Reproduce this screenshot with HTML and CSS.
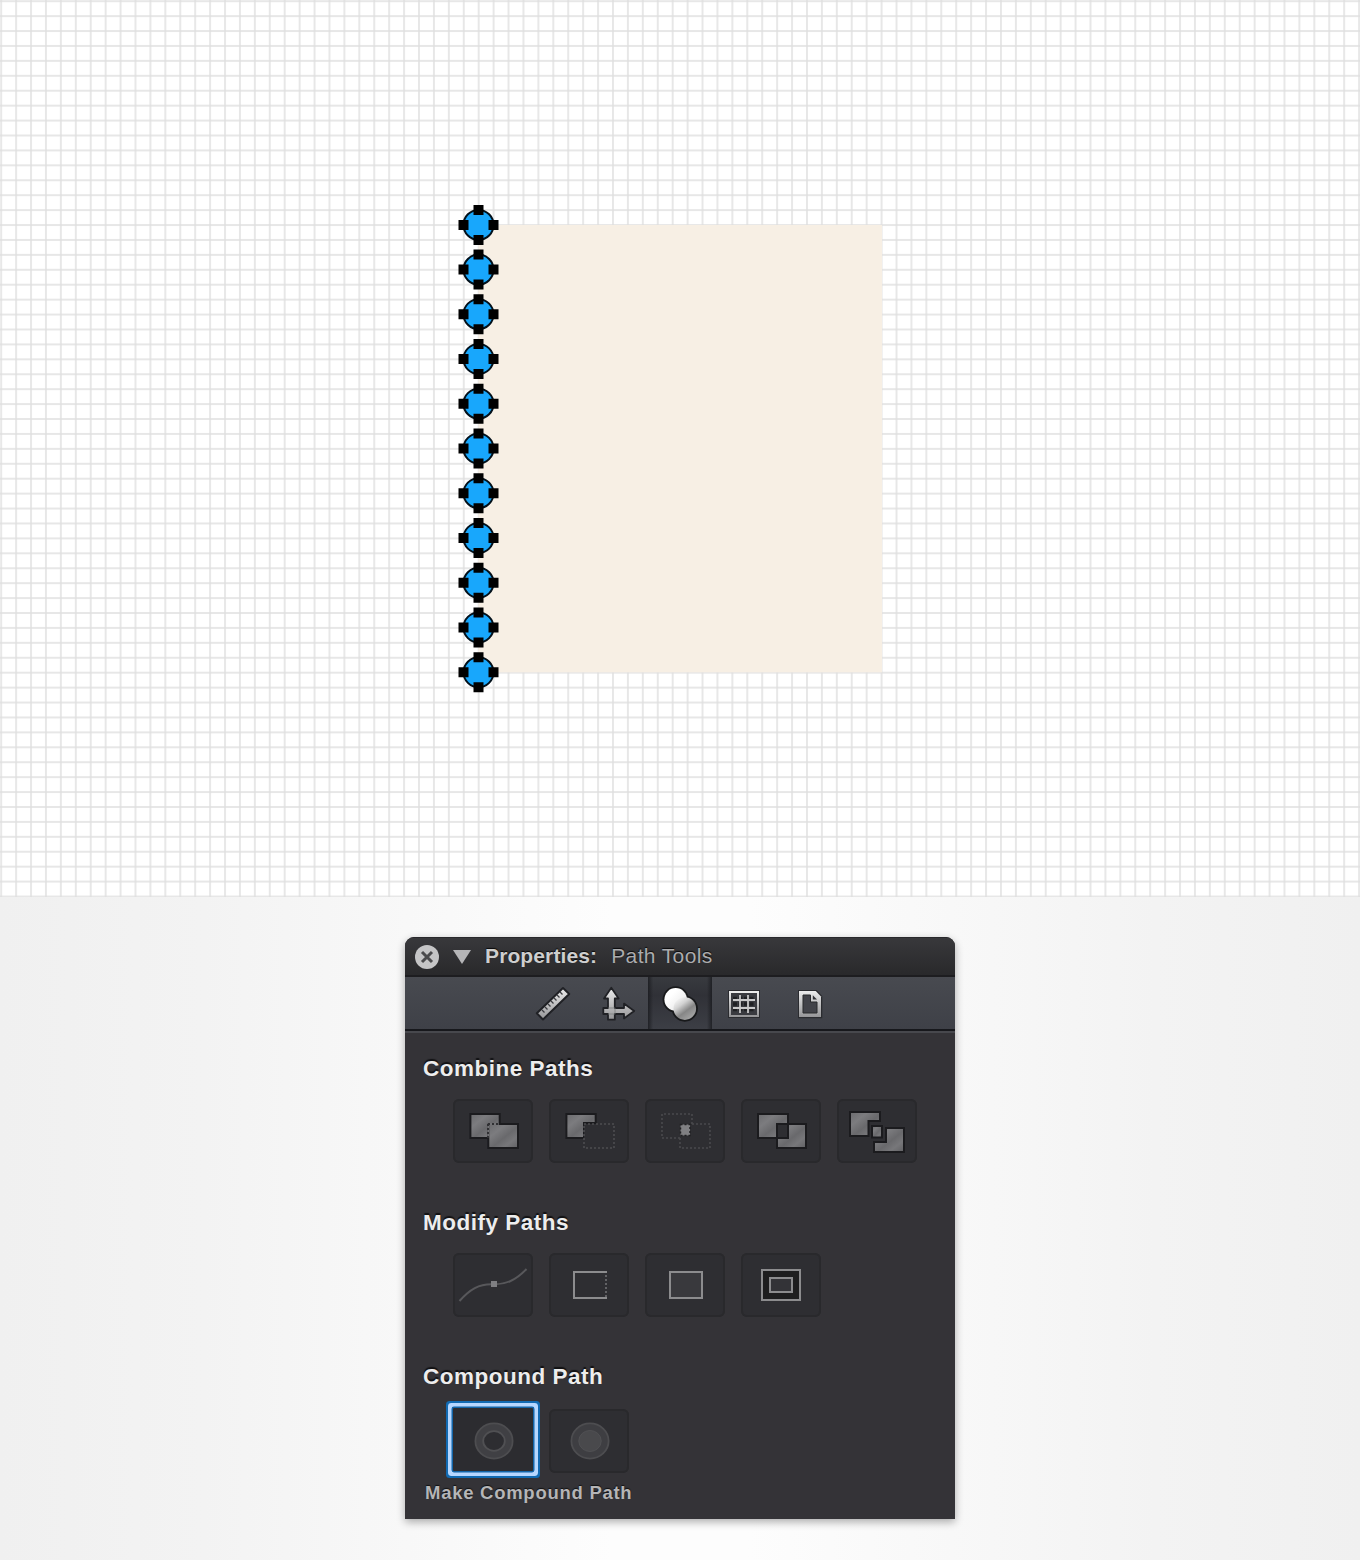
FILE: index.html
```html
<!DOCTYPE html>
<html lang="en">
<head>
<meta charset="utf-8">
<title>Path Tools</title>
<link rel="stylesheet" href="styles.css">
</head>
<body>
<svg class="canvas" viewBox="0 0 1360 897">
  <defs>
    <pattern id="grid" x="1.2" y="1.2" width="14.922" height="14.922" patternUnits="userSpaceOnUse">
      <path d="M0 0H15M0 14.922H15M0 0V15M14.922 0V15" stroke="#dfdfdf" stroke-width="1.45" fill="none"/>
    </pattern>
    <g id="dot">
      <circle r="15" fill="#18a7fc" stroke="#03111b" stroke-width="2"/>
      <path d="M-5-20H5V-10H-5zM-5 10H5V20H-5zM-20-5H-10V5H-20zM10-5H20V5H10z" fill="#000"/>
    </g>
  </defs>
  <rect width="1360" height="897" fill="#fff"/>
  <rect width="1360" height="897" fill="url(#grid)"/>
  <rect x="478.5" y="225" width="403.5" height="447.3" fill="#f7efe4"/>
  <use href="#dot" x="478.5" y="224.9"/>
  <use href="#dot" x="478.5" y="269.6"/>
  <use href="#dot" x="478.5" y="314.2"/>
  <use href="#dot" x="478.5" y="359"/>
  <use href="#dot" x="478.5" y="403.7"/>
  <use href="#dot" x="478.5" y="448.5"/>
  <use href="#dot" x="478.5" y="493.2"/>
  <use href="#dot" x="478.5" y="538"/>
  <use href="#dot" x="478.5" y="582.8"/>
  <use href="#dot" x="478.5" y="627.5"/>
  <use href="#dot" x="478.5" y="672.3"/>
</svg>
<main class="desk">
  <section class="panel">
    <header class="titlebar">
      <svg class="close" viewBox="0 0 24 24"><circle cx="12" cy="12" r="12" fill="#c5c5c6"/><path d="M7 7l10 10m0-10l-10 10" stroke="#4b4b4d" stroke-width="3"/></svg>
      <svg class="fold" viewBox="0 0 18 14"><path d="M0 0H18L9 14z" fill="#b5b5b7"/></svg>
      <b class="name">Properties:</b><span class="sub">Path Tools</span>
    </header>
    <nav class="toolbar">
      <svg class="tool" viewBox="0 0 64 52">
        <defs><linearGradient id="metal" x2="0" y2="1"><stop stop-color="#ececec"/><stop offset="1" stop-color="#969698"/></linearGradient></defs>
        <path d="M43 11L49.2 17L23 42.5L16.8 36.3z" fill="url(#metal)" stroke="#202125" stroke-width="2" stroke-linejoin="round"/>
        <path d="M22 33l2.5 2.5M25 30l2.5 2.5M28 27l2.5 2.5M31 24l2.5 2.5M34 21l2.5 2.5M37 18l2.5 2.5M40 15l2.5 2.5" stroke="#3b3c40" stroke-width="1.3"/>
      </svg>
      <svg class="tool" viewBox="0 0 64 52">
        <path d="M27.3 10.8L34.6 21.5H30.8V31H40V26.6L50.2 34L40 41.4V37H30.8V42.7H24V37H19.3V31H24V21.5H20z" fill="url(#metal)" stroke="#202125" stroke-width="1.8" stroke-linejoin="round"/>
        <path d="M24 31h7v6h-7" fill="none" stroke="#77787a" stroke-width=".7"/>
      </svg>
      <svg class="tool tool-active" viewBox="0 0 64 52">
        <defs>
          <linearGradient id="b1" x2="1" y2="1"><stop offset=".3" stop-color="#fff"/><stop offset="1" stop-color="#e2e2e2"/></linearGradient>
          <linearGradient id="b2" x1=".15" y1=".1" x2=".75" y2=".9"><stop stop-color="#f4f4f4"/><stop offset=".3" stop-color="#d2d2d2"/><stop offset=".65" stop-color="#868686"/><stop offset="1" stop-color="#a2a2a2"/></linearGradient>
        </defs>
        <g fill="#18191b"><circle cx="27.7" cy="22.4" r="13.1"/><circle cx="36.8" cy="31.6" r="13.1"/></g>
        <circle cx="27.7" cy="22.4" r="11.3" fill="url(#b1)"/><circle cx="36.8" cy="31.6" r="11.3" fill="url(#b2)"/>
      </svg>
      <svg class="tool" viewBox="0 0 64 52">
        <rect x="16" y="13" width="32" height="28" fill="#2b2c30"/>
        <rect x="18" y="15" width="28" height="24" fill="#3a3b40" stroke="url(#metal)" stroke-width="2"/>
        <path d="M21 21.5H43M21 27H43M21 32.5H43" stroke="#1f2023" stroke-width="3.6" stroke-dasharray="4 1.5"/>
        <path d="M21 23H43M21 31H43M28 18V36M36 18V36" stroke="#c9c9ca" stroke-width="1.8"/>
      </svg>
      <svg class="tool" viewBox="0 0 64 52">
        <path d="M22 13H40.5L46.3 19V41.2H22z" fill="#2b2c30"/>
        <path d="M23 14H39.7L45 19.5V40H23z" fill="url(#metal)"/>
        <path d="M27 18H34.5V25H41V36H27z" fill="#424349" stroke="#292a2d" stroke-width="1"/>
        <path d="M36.8 18.3V22.5H41z" fill="#303135"/>
      </svg>
    </nav>
    <div class="content">
      <h2>Combine Paths</h2>
      <div class="buttons">
        <svg class="btn" viewBox="0 0 80 64">
          <defs>
            <linearGradient id="tile" x2="1" y2="1"><stop stop-color="#6b6b6e"/><stop offset=".3" stop-color="#7c7c7f"/><stop offset=".55" stop-color="#69696c"/><stop offset=".75" stop-color="#77777a"/><stop offset="1" stop-color="#606063"/></linearGradient>
          </defs>
          <g fill="url(#tile)" stroke="#1b1b1e" stroke-width="2"><path d="M17.4 15H46.7V39H17.4z"/><path d="M35.3 25H65V49H35.3z"/></g>
          <path d="M36.3 25H45.7M35.3 24V38" stroke="#737376" stroke-width="2"/><path d="M35 25H47M35 25V39" stroke="#303033" stroke-width="2" stroke-dasharray="2"/>
        </svg>
        <svg class="btn" viewBox="0 0 80 64">
          <path d="M17.4 15H46.7V24H35V39H17.4z" fill="url(#tile)" stroke="#1b1b1e" stroke-width="2"/>
          <rect x="35" y="25" width="30" height="24" fill="#2e2e32" stroke="#4d4d50" stroke-width="1.6" stroke-dasharray="2"/>
        </svg>
        <svg class="btn" viewBox="0 0 80 64">
          <path d="M35 39H17V15H47V25M47 25H65V49H35V39" fill="none" stroke="#4a4a4d" stroke-width="1.6" stroke-dasharray="2"/>
          <rect x="35.5" y="25.5" width="9.5" height="11" fill="#808083" stroke="#202023" stroke-width="1.5" stroke-dasharray="2"/>
        </svg>
        <svg class="btn" viewBox="0 0 80 64">
          <path d="M17 15H47V25H36V39H17z" fill="url(#tile)" stroke="#1b1b1e" stroke-width="2"/>
          <path d="M47 25H65V49H36V39H47z" fill="url(#tile)" stroke="#1b1b1e" stroke-width="2"/>
        </svg>
        <svg class="btn" viewBox="0 0 80 64">
          <g fill="url(#tile)" stroke="#1b1b1e" stroke-width="2"><path d="M13 13H43V22H31.5V37H13z"/><path d="M35 27H45V38.5H35z"/><path d="M49 29H67V53H37V43H49z"/></g>
        </svg>
      </div>
      <h2>Modify Paths</h2>
      <div class="buttons">
        <svg class="btn" viewBox="0 0 80 64">
          <path d="M6.5 48C17 36 26 31 39 31.2C53 32 63 27 73.5 16" fill="none" stroke="#58585b" stroke-width="2"/>
          <rect x="38" y="28" width="6" height="6" fill="#7f7f82"/>
        </svg>
        <svg class="btn" viewBox="0 0 80 64">
          <path d="M58 19H25V45H58" fill="none" stroke="#8c8c8e" stroke-width="2"/><path d="M57 22V44" stroke="#626265" stroke-width="2" stroke-dasharray="2"/>
        </svg>
        <svg class="btn" viewBox="0 0 80 64"><rect x="25" y="19" width="32" height="26" fill="#39393d" stroke="#8c8c8e" stroke-width="2"/></svg>
        <svg class="btn" viewBox="0 0 80 64"><rect x="21" y="17" width="38" height="30" fill="#1e1e1f" stroke="#8c8c8e" stroke-width="2"/><rect x="29" y="25" width="22" height="14" fill="#333337" stroke="#8c8c8e" stroke-width="2"/></svg>
      </div>
      <h2>Compound Path</h2>
      <div class="buttons">
        <svg class="btn btn-focus" viewBox="0 -1 80 63">
          <ellipse cx="41" cy="32" rx="18.6" ry="17.6" fill="#404044" stroke="#4d4d50" stroke-width="1.8"/>
          <ellipse cx="41" cy="32" rx="10.8" ry="9.8" fill="#2d2d31" stroke="#505053" stroke-width="1.8"/>
        </svg>
        <svg class="btn" viewBox="0 0 80 64">
          <ellipse cx="41" cy="32" rx="18.6" ry="17.6" fill="#3e3e42" stroke="#4d4d50" stroke-width="1.8"/>
          <ellipse cx="41" cy="32" rx="11.2" ry="10.5" fill="#49494c" stroke="#505053" stroke-width="1"/>
        </svg>
      </div>
      <p class="caption">Make Compound Path</p>
    </div>
  </section>
</main>
</body>
</html>
```

FILE: styles.css
```css
* { box-sizing: border-box; }
body {
  margin: 0;
  width: 1360px;
  font-family: "Liberation Sans", Arial, sans-serif;
}
svg { display: block; flex: none; }
.canvas { width: 1360px; height: 897px; }
.desk {
  height: 663px;
  padding-top: 40px;
  display: flex;
  justify-content: center;
  align-items: flex-start;
  background: linear-gradient(90deg, #f0f0f0, #f3f3f3 15%, #fdfdfd 45%, #fdfdfd 55%, #f3f3f3 85%, #f0f0f0);
}
.panel {
  width: 550px;
  height: 582px;
  border-radius: 9px 9px 0 0;
  background: #343337;
  box-shadow: 0 3px 9px rgba(0, 0, 0, .32);
  overflow: hidden;
}
.titlebar {
  height: 40px;
  padding: 0 10px 2px;
  display: flex;
  align-items: center;
  background: linear-gradient(#38383b, #29292b);
  border-top: 1px solid #29292c;
  border-bottom: 2px solid #1d1d20;
  font-size: 21px;
  line-height: 35px;
  text-shadow: 0 -1px 1px #09090a;
}
.close { width: 24px; height: 24px; margin-top: 2px; }
.fold { width: 18px; height: 14px; margin: 3px 14px 0 14px; }
.name { color: #cecece; letter-spacing: .12px; }
.sub { color: #acacae; margin-left: 14px; letter-spacing: .38px; }
.toolbar {
  height: 56px;
  display: flex;
  justify-content: center;
  background: linear-gradient(#484a50, #3e4047);
  border-bottom: 2px solid #47484d;
  box-shadow: inset 0 -2px #17181c;
}
.tool { width: 64px; height: 52px; }
.tool-active {
  background:
    linear-gradient(90deg, rgba(24, 25, 29, .75), transparent 8%, transparent 92%, rgba(24, 25, 29, .75)),
    linear-gradient(#383a3f, #303137 35%, #3c3e45);
}
.content { padding: 21px 18px 0; }
h2 {
  margin: 0 0 15px;
  height: 30px;
  font-size: 22.5px;
  line-height: 30px;
  letter-spacing: .5px;
  color: #ededed;
  text-shadow: 0 -2px 1px #111113;
}
.buttons { display: flex; gap: 16px; padding-left: 30px; margin-bottom: 45px; }
.btn {
  width: 80px;
  height: 64px;
  border-radius: 6px;
  background: #2e2e32;
  box-shadow: inset 0 0 0 2px #29292c;
}
.btn-focus {
  height: 63px;
  margin-top: -1px;
  border-radius: 1px;
  background: #2c2c30;
  box-shadow: 0 0 0 1.5px #1264a7, 0 0 0 5px #b6d7ff, 0 0 0 7px #116ab2;
}
.content .buttons:last-of-type { margin: 17px 0 0; }
.caption {
  margin: 8px 0 0 2px;
  font-size: 18.5px;
  line-height: 24px;
  font-weight: bold;
  letter-spacing: .73px;
  color: #b5b5b7;
  text-shadow: 0 -1px 1px #111113;
}
```
